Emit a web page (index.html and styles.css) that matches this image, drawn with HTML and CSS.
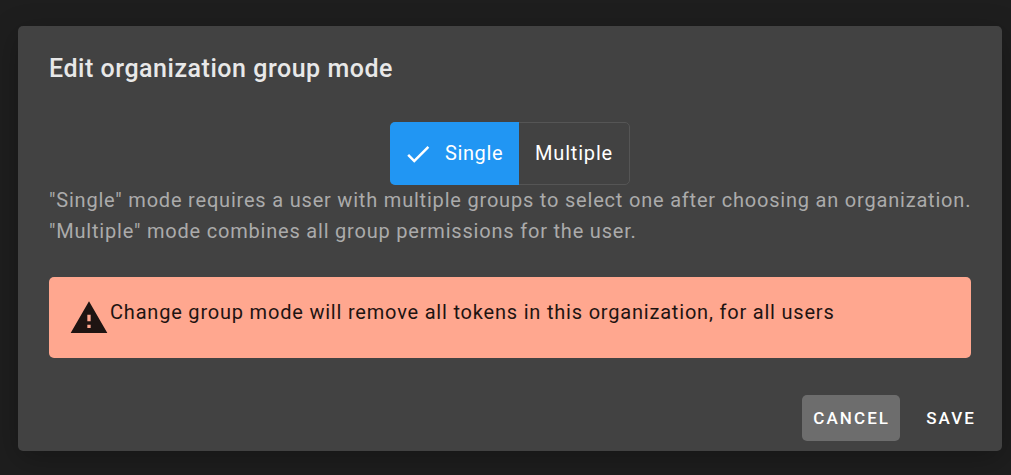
FILE: index.html
```html
<!DOCTYPE html>
<html lang="en">
<head>
<meta charset="utf-8">
<title>Edit organization group mode</title>
<link rel="stylesheet" href="styles.css">
</head>
<body>
<div class="dialog">
  <h2 class="title">Edit organization group mode</h2>
  <div class="toggle-row">
    <div class="toggle">
      <button class="opt opt-on"><svg class="check" viewBox="0 0 24 24"><path d="M9 16.17 4.83 12l-1.42 1.41L9 19 21 7l-1.41-1.41z"/></svg>Single</button>
      <button class="opt">Multiple</button>
    </div>
  </div>
  <p class="desc">"Single" mode requires a user with multiple groups to select one after choosing an organization.<br>"Multiple" mode combines all group permissions for the user.</p>
  <div class="alert">
    <svg class="warn" viewBox="0 0 24 24"><path d="M1 21h22L12 2 1 21zm12-3h-2v-2h2v2zm0-4h-2v-4h2v4z"/></svg>
    <span class="alert-text">Change group mode will remove all tokens in this organization, for all users</span>
  </div>
  <div class="actions">
    <button class="btn btn-hover">CANCEL</button>
    <button class="btn">SAVE</button>
  </div>
</div>
</body>
</html>
```
FILE: styles.css
```css
* { box-sizing: border-box; }
html, body { height: 100%; }
body {
  margin: 0;
  padding: 26px 9px 24px 18px;
  background: #1e1e1e;
  font-family: Roboto, "Liberation Sans", sans-serif;
  overflow: hidden;
}
.dialog {
  height: 425px;
  background: #424242;
  border-radius: 5px;
  box-shadow: 0 8px 30px rgba(0,0,0,.25);
  padding: 27px 31px 0;
  display: flex;
  flex-direction: column;
}
.title {
  margin: 0;
  color: #e8e8e8;
  font-size: 25px;
  line-height: 32px;
  font-weight: 500;
  letter-spacing: .53px;
}
.toggle-row {
  display: flex;
  justify-content: center;
  margin-top: 37px;
}
.toggle {
  display: flex;
  height: 63px;
  border: 1px solid #555;
  border-radius: 5px;
}
.opt {
  display: flex;
  align-items: center;
  border: 0;
  background: none;
  color: #fff;
  font: 400 20px Roboto, sans-serif;
  letter-spacing: .8px;
  padding: 0 16px 2px;
  margin: -1px 0;
}
.opt-on {
  background: #2196f3;
  border-radius: 5px 0 0 5px;
  margin-left: -1px;
  padding: 0 16px 2px 13px;
  letter-spacing: .6px;
}
.check {
  width: 30px;
  height: 30px;
  fill: #fff;
  margin: 2px 12px 0 0;
}
.desc {
  margin: 0;
  color: #ababab;
  font-size: 20px;
  line-height: 31px;
  letter-spacing: .8px;
  white-space: nowrap;
}
.alert {
  margin-top: 30px;
  height: 81px;
  background: #ffa78f;
  border-radius: 5px;
  padding: 21px 20px;
  display: flex;
  align-items: flex-start;
  color: #1e1412;
}
.warn {
  width: 40px;
  height: 40px;
  fill: #1e1412;
  flex: none;
}
.alert-text {
  font-size: 20px;
  line-height: 32px;
  letter-spacing: .8px;
  margin-left: 1px;
  margin-top: -2px;
}
.actions {
  display: flex;
  justify-content: flex-end;
  gap: 15px;
  margin-top: 37px;
  margin-right: -15px;
}
.btn {
  height: 46px;
  padding: 0 10px 0 11px;
  border: 0;
  border-radius: 5px;
  background: none;
  color: #fff;
  font: 500 17px Roboto, sans-serif;
  letter-spacing: 2.1px;
}
.btn-hover { background: #6d6d6d; }
```
